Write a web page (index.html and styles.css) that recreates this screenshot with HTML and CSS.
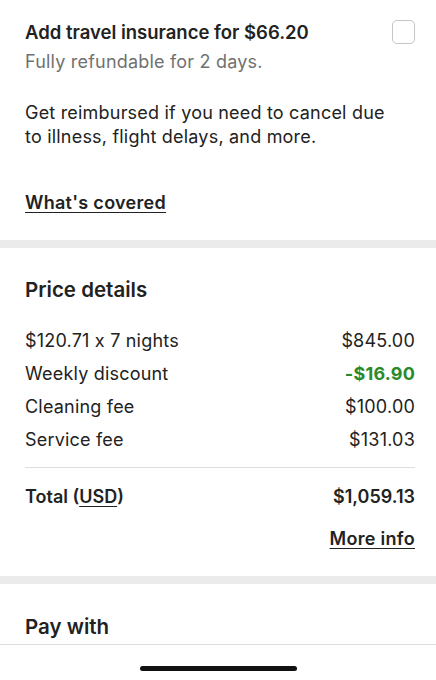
FILE: index.html
```html
<!DOCTYPE html>
<html>
<head>
<meta charset="utf-8">
<link rel="stylesheet" href="styles.css">
</head>
<body>
<div class="page">
  <section class="insurance">
    <div class="ins-head">
      <div class="ins-text">
        <div class="ins-title">Add travel insurance for $66.20</div>
        <div class="ins-sub">Fully refundable for 2 days.</div>
      </div>
      <span class="checkbox"></span>
    </div>
    <p class="ins-body">Get reimbursed if you need to cancel due to illness, flight delays, and more.</p>
    <a class="link covered">What's covered</a>
  </section>
  <div class="band"></div>
  <section class="price">
    <h2 class="heading">Price details</h2>
    <div class="rows">
      <div class="row"><span>$120.71 x 7 nights</span><span>$845.00</span></div>
      <div class="row"><span>Weekly discount</span><span class="discount">-$16.90</span></div>
      <div class="row"><span>Cleaning fee</span><span>$100.00</span></div>
      <div class="row"><span>Service fee</span><span>$131.03</span></div>
    </div>
    <div class="divider"></div>
    <div class="row total"><span>Total (<u>USD</u>)</span><span>$1,059.13</span></div>
    <div class="more"><a class="link">More info</a></div>
  </section>
  <div class="band"></div>
  <section class="pay">
    <h2 class="heading">Pay with</h2>
  </section>
  <footer class="bottom"><span class="home"></span></footer>
</div>
</body>
</html>
```
FILE: styles.css
```css
* { box-sizing: border-box; }
html, body { margin: 0; padding: 0; background: #fff; }
body {
  font-family: Inter, "Noto Sans", sans-serif;
  color: #222222;
  width: 436px;
  height: 680px;
  overflow: hidden;
}
.page { display: flex; flex-direction: column; }
.insurance { padding: 20px 21px 25px 25px; }
.ins-head { display: flex; justify-content: space-between; align-items: flex-start; }
.ins-title { font-size: 18.5px; font-weight: 600; line-height: 24px; letter-spacing: 0; }
.ins-sub { font-size: 18px; line-height: 24px; color: #717171; margin-top: 6px; letter-spacing: 0.2px; }
.checkbox {
  width: 23px; height: 24px;
  border: 1.5px solid #c4c4c4; border-radius: 5px;
}
.ins-body { margin: 27px 0 0; font-size: 18px; line-height: 24px; letter-spacing: 0.2px; max-width: 376px; }
.link { color: #222222; text-decoration: underline; text-underline-offset: 3px; font-weight: 600; cursor: pointer; }
.covered { display: block; margin-top: 42px; font-size: 18px; line-height: 24px; letter-spacing: 0.3px; }
.band { height: 8px; background: #ebebeb; }
.price { padding: 29px 21px 25px 25px; }
.heading { margin: 0; font-size: 20.5px; font-weight: 600; line-height: 26px; letter-spacing: 0; }
.rows { margin-top: 21px; }
.row { display: flex; justify-content: space-between; font-size: 18px; line-height: 33px; letter-spacing: 0.2px; }
.discount { color: #2a8a2a; font-weight: 700; }
.divider { height: 1px; background: #dddddd; margin-top: 11px; }
.total { margin-top: 17px; line-height: 24px; font-weight: 600; letter-spacing: 0; }
.total u { text-underline-offset: 3px; }
.more { display: flex; justify-content: flex-end; margin-top: 18px; font-size: 18px; line-height: 24px; letter-spacing: 0.3px; }
.pay { padding: 30px 25px 4px; }
.bottom { height: 36px; border-top: 1px solid #dddddd; display: flex; justify-content: center; align-items: center; padding-top: 12px; }
.home { width: 157px; height: 5px; border-radius: 3px; background: #111; }
```
